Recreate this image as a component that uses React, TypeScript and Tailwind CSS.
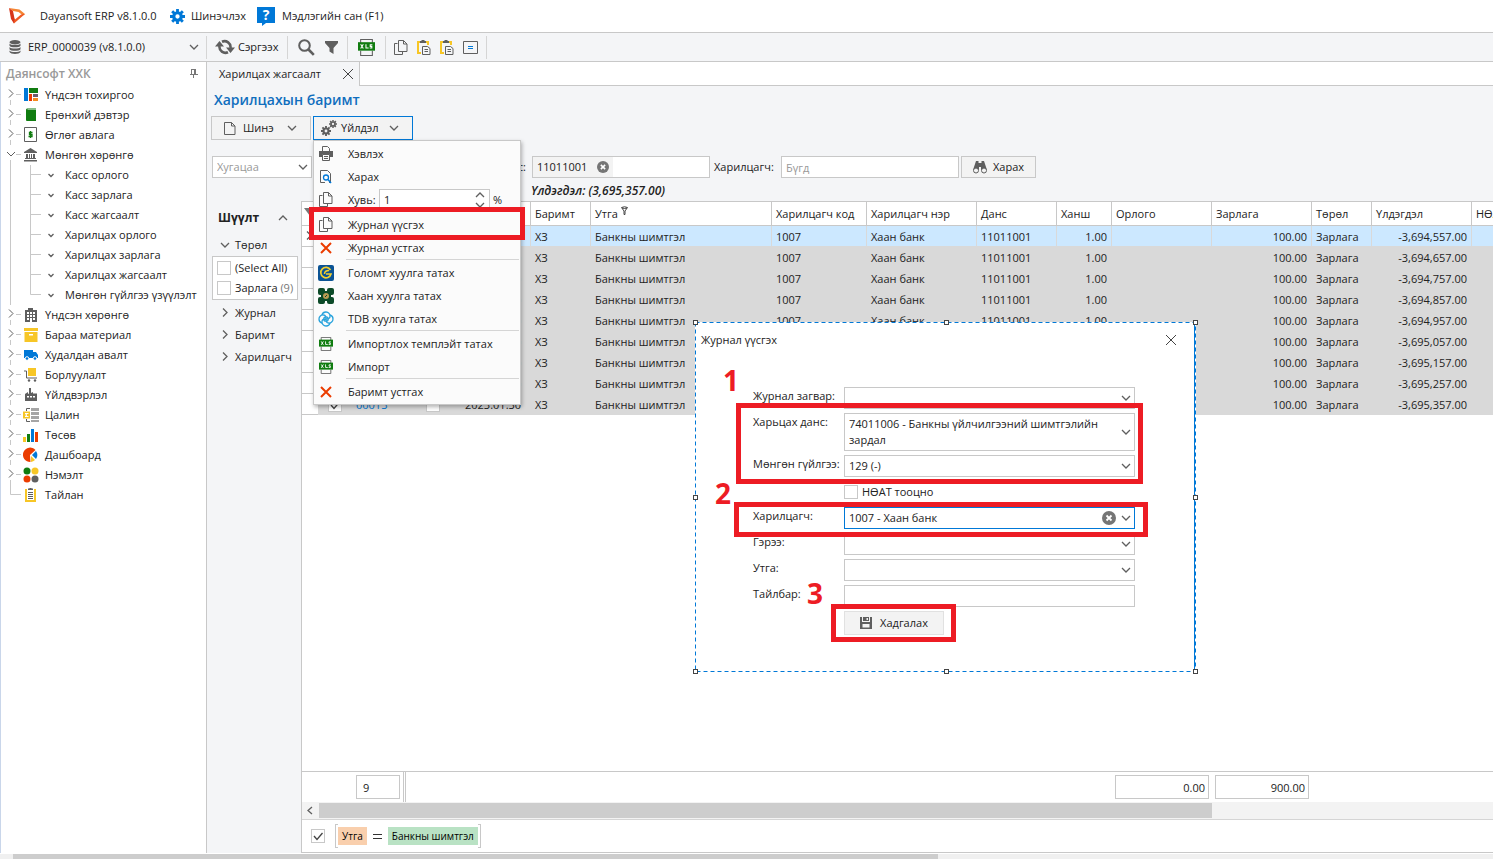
import type { ReactNode } from 'react'
import clsx from 'clsx'

const GRAY = '#5f5f5f'
const BLUE = '#0078d7'
const GREEN = '#107c10'
const RED = '#eb3c00'
const YELLOW = '#f7c626'

function Svg({ w, h, children, className }: { w: number; h: number; children: ReactNode; className?: string }) {
  return (
    <svg
      width={w}
      height={h}
      viewBox={`0 0 ${w} ${h}`}
      fill="none"
      aria-hidden="true"
      className={clsx('block shrink-0', className)}
    >
      {children}
    </svg>
  )
}

const ChevronDown = ({ className }: { className?: string }) => (
  <Svg w={10} h={10} className={className}>
    <path d="M1 3l4 4 4-4" stroke={GRAY} strokeWidth="1.300" />
  </Svg>
)

const ChevronRight = () => (
  <Svg w={10} h={10}>
    <path d="M3 .500l4 4-4 4" stroke={GRAY} strokeWidth="1.300" />
  </Svg>
)

const ChevronUp = () => (
  <Svg w={10} h={10}>
    <path d="M1 7l4-4 4 4" stroke={GRAY} strokeWidth="1.300" />
  </Svg>
)

const CloseIcon = () => (
  <Svg w={12} h={12}>
    <path d="M1 1l10 10M11 1L1 11" stroke="#444" />
  </Svg>
)

const ClearIcon = ({ size }: { size: number }) => (
  <svg width={size} height={size} viewBox="0 0 14 14" aria-hidden="true" className="block shrink-0">
    <circle cx="7" cy="7" r="7" fill="#757575" />
    <path d="M4.5 4.5l5 5M9.5 4.5l-5 5" stroke="#fff" strokeWidth="1.8" />
  </svg>
)

const Logo = () => (
  <Svg w={18} h={18}>
    <path d="M1 1l10.500 1.500L17 7l-2 1.500-4.500-3.500L5 4z" fill="#f58634" />
    <path d="M17 7L6 16.500 4 12.500l2.500-1 .500 1L13 7.500l2-.500z" fill="#ef5a24" />
    <path d="M1 1l4 3 1.500 7.500-.500 5L3 12z" fill="#d8351a" />
  </Svg>
)

function Gear({ size, color }: { size: number; color: string }) {
  return (
    <svg width={size} height={size} viewBox="0 0 16 16" fill="none" aria-hidden="true" className="block shrink-0">
      <circle cx="8" cy="8" r="4" stroke={color} strokeWidth="3.400" />
      <g stroke={color} strokeWidth="3">
        <path d="M8 0v3.500M8 12.500V16M0 8h3.500M12.500 8H16M2.300 2.300l2.500 2.500M11.200 11.200l2.500 2.500M13.700 2.300l-2.500 2.500M4.800 11.200l-2.500 2.500" />
      </g>
    </svg>
  )
}

const GearsIcon = () => (
  <span className="flex h-4 w-4 items-end">
    <Gear size={10} color={GRAY} />
    <span className="-ml-0.5 self-start">
      <Gear size={8} color={GRAY} />
    </span>
  </span>
)

const HelpIcon = () => (
  <span className="relative block h-[19px] w-[18px] text-center text-[14px] font-bold leading-[16px] text-white">
    <Svg w={18} h={19} className="absolute inset-0">
      <path d="M0 0h18v16H9l-4 3v-3H0z" fill={BLUE} />
    </Svg>
    <span className="relative">?</span>
  </span>
)

const DatabaseIcon = () => (
  <Svg w={12} h={14}>
    <g fill={GRAY}>
      <ellipse cx="6" cy="2.200" rx="5.500" ry="2.200" />
      <path d="M.5 3.500c1 2 10 2 11 0v2.300c-1 2-10 2-11 0z" />
      <path d="M.5 7c1 2 10 2 11 0v2.300c-1 2-10 2-11 0z" />
      <path d="M.5 10.500c1 2 10 2 11 0v1.500c-1 2.500-10 2.500-11 0z" />
    </g>
  </Svg>
)

const RefreshIcon = () => (
  <Svg w={20} h={16}>
    <path d="M4.500 7a6 6 0 0 0 8.500 6.200M15.500 9A6 6 0 0 0 7 2.800" stroke={GRAY} strokeWidth="2.600" />
    <path d="M0 7.500L4.500 2 9 7.500zM11 8.500h9L15.500 14z" fill={GRAY} />
  </Svg>
)

const SearchIcon = () => (
  <Svg w={17} h={17}>
    <circle cx="6.500" cy="6.500" r="5.300" stroke={GRAY} strokeWidth="2" />
    <path d="M10.500 10.500l5.300 5.300" stroke={GRAY} strokeWidth="2.600" />
  </Svg>
)

const FunnelIcon = () => (
  <Svg w={13} h={13}>
    <path d="M0 0h13v2L8.500 7v6l-4-2.500V7L0 2z" fill={GRAY} />
  </Svg>
)

function XlsIcon({ size }: { size: number }) {
  return (
    <svg width={size} height={size} viewBox="0 0 16 16" fill="none" aria-hidden="true" className="block shrink-0">
      <path d="M2.500 4V.500h11V4M2.500 11v4.500h11V11" stroke={GRAY} />
      <path d="M0 3h16v8H0z" fill={GREEN} />
      <path d="M2.500 5l2.500 4M5 5L2.500 9M7.500 5v3.500H10M13.500 5.500h-2v1.500h1.500v1.500h-2" stroke="#fff" strokeWidth="1" />
    </svg>
  )
}

const CopyIcon = () => (
  <Svg w={14} h={15}>
    <path d="M3.500 3.500h-3v11h8v-3" stroke={GRAY} />
    <path d="M4.500.500h5l3.500 3.500v7.500H4.500zM9.500.500V4H13" stroke={GRAY} />
  </Svg>
)

const PasteIcon = () => (
  <Svg w={14} h={15}>
    <path d="M3 2H1v11h3M9 2h2v3" stroke={YELLOW} strokeWidth="2" />
    <path d="M3 1h1.500V0h3v1H9v2H3z" fill={GRAY} />
    <path d="M5.500 6.500h5l2.500 2v6H5.500zM7.500 9.500h3.500M7.500 11.500h3.500" stroke={GRAY} />
  </Svg>
)

const EqualsBoxIcon = () => (
  <Svg w={15} h={13}>
    <path d="M.5.500h14v12H.5z" stroke={GRAY} />
    <path d="M5 5.500h5M5 7.500h5" stroke={BLUE} />
  </Svg>
)

const PinIcon = () => (
  <Svg w={8} h={9}>
    <path d="M1.500 0v5M1 .500h5M0 5.500h8M3.500 5v4" stroke="#777" />
    <path d="M4 0h2v5H4z" fill="#777" />
  </Svg>
)

const DocIcon = () => (
  <Svg w={12} h={13}>
    <path d="M.5.500h7l3.500 3.500v8.500H.5zM7.500.500V4H11" stroke={GRAY} />
  </Svg>
)

const BinocularsIcon = () => (
  <Svg w={14} h={13}>
    <path d="M3 0h2.500v2h3V0H11l3 9H8V6H6v3H0z" fill={GRAY} />
    <circle cx="3" cy="9.500" r="2.500" stroke={GRAY} fill="#f3f3f3" />
    <circle cx="11" cy="9.500" r="2.500" stroke={GRAY} fill="#f3f3f3" />
  </Svg>
)

const PrinterIcon = () => (
  <Svg w={14} h={15}>
    <path d="M3.500 5V.500h5L10.500 2.500V5" stroke={GRAY} />
    <path d="M0 5h14v6h-3V8.500H3V11H0z" fill={GRAY} />
    <path d="M3.500 8.500h7v6h-7zM5 10.500h4M5 12.500h4" stroke={GRAY} />
  </Svg>
)

const PreviewIcon = () => (
  <Svg w={12} h={14}>
    <path d="M5 12.500H.5V.500h7l3 3V12.500H9" stroke={GRAY} />
    <circle cx="6" cy="7.500" r="2.500" stroke={BLUE} strokeWidth="1.300" />
    <path d="M8 9.500l3 3.500" stroke={BLUE} strokeWidth="1.500" />
  </Svg>
)

const DeleteIcon = () => (
  <Svg w={12} h={12}>
    <path d="M1 1l10 10M11 1L1 11" stroke={RED} strokeWidth="2" />
  </Svg>
)

const GolomtIcon = () => (
  <Svg w={16} h={16}>
    <rect width="16" height="16" rx="2" fill="#0b5394" />
    <path d="M12.500 5A5.200 5.200 0 1 0 13 9H8" stroke="#f3d02f" strokeWidth="1.700" />
    <path d="M11 5.500c-3 0-4.500 1.500-4.500 3.500" stroke="#f3d02f" strokeWidth="1.500" />
  </Svg>
)

const KhanIcon = () => (
  <Svg w={16} h={16}>
    <g fill="#0c4a28">
      <rect width="7" height="7" rx="2" />
      <rect x="9" width="7" height="7" rx="2" />
      <rect y="9" width="7" height="7" rx="2" />
      <rect x="9" y="9" width="7" height="7" rx="2" />
      <path d="M3 3h10v10H3z" />
    </g>
    <circle cx="8" cy="8" r="3" fill="#b99b52" />
    <path d="M7 9l2-2" stroke="#0c4a28" />
  </Svg>
)

const TdbIcon = () => (
  <Svg w={16} h={16}>
    <g stroke="#2aa3dc" strokeWidth="1.300">
      <circle cx="8" cy="8" r="2.200" />
      <path d="M8 1a4 4 0 0 1 4 4.500c0 2-2 2.500-4 2.500M15 8a4 4 0 0 1-4.500 4c-2 0-2.500-2-2.500-4M8 15a4 4 0 0 1-4-4.500c0-2 2-2.500 4-2.500M1 8a4 4 0 0 1 4.500-4c2 0 2.500 2 2.500 4" />
      <path d="M12 4a4 4 0 0 1 3 4M12 12a4 4 0 0 1-4 3M4 12a4 4 0 0 1-3-4M4 4a4 4 0 0 1 4-3" />
    </g>
  </Svg>
)

const SaveIcon = () => (
  <Svg w={12} h={12}>
    <path d="M0 0h2v5h8V0h2v12H0z" fill={GRAY} />
    <path d="M3 0h6v4H3z" fill={GRAY} />
    <path d="M6.500 1h1.500v2H6.500zM2.500 7h7v3.500h-7z" fill="#f3f3f3" />
  </Svg>
)

const moduleIcons = {
  settings: (
    <>
      <path d="M1 1h4v13H1z" fill={BLUE} />
      <path d="M6 1h9v5H6z" fill={GREEN} />
      <path d="M6 7h3v7H6z" fill={RED} />
      <path d="M10 7h5v3h-5z" fill="#6b5b6b" />
      <path d="M10 11h5v3h-5z" fill="#f58b1f" />
    </>
  ),
  ledger: <path d="M3 3q0-1.500 1-1.500h9v1H4.500v.500H13v11H4q-1 0-1-1z" fill={GREEN} />,
  receivable: (
    <>
      <path d="M1.500.500h12v14h-12z" stroke={GRAY} />
      <path d="M9.500 5.500h-3v2h2.500v2H5.500M7.500 4v7" stroke={GREEN} strokeWidth="1.300" />
    </>
  ),
  bank: (
    <path
      d="M1 5l6.500-4L14 5v1H1zM3 7h2v4H3zM6 7h1v4H6zM8 7h1v4H8zM10 7h2v4h-2zM2 11h11v1H2zM1 13h13v1.500H1z"
      fill={GRAY}
    />
  ),
  building: (
    <>
      <path d="M5 1h5v2H5zM2 3h12v12H2z" fill={GRAY} />
      <path d="M4 5h2v2H4zM7 5h2v2H7zM10 5h2v2h-2zM4 8h2v2H4zM7 8h2v2H7zM10 8h2v2h-2zM4 11h2v2H4zM10 11h2v2h-2zM7 11h2v4H7z" fill="#fff" />
    </>
  ),
  box: (
    <>
      <path d="M1 1h14v3H1zM1.500 5h13v10h-13z" fill={YELLOW} />
      <path d="M6 7h4v1.500H6z" fill="#fff" />
    </>
  ),
  truck: (
    <>
      <path d="M1 3h9v8H1zM10 5h3l2 3v3h-5z" fill={BLUE} />
      <circle cx="4" cy="11.500" r="1.800" fill={BLUE} stroke="#fff" />
      <circle cx="12" cy="11.500" r="1.800" fill={BLUE} stroke="#fff" />
    </>
  ),
  cart: (
    <>
      <path d="M5 1h8v8H5z" fill={YELLOW} />
      <path d="M1 4h2.500v7H14" stroke={GRAY} />
      <circle cx="6" cy="13.500" r="1.200" fill={GRAY} />
      <circle cx="12" cy="13.500" r="1.200" fill={GRAY} />
    </>
  ),
  factory: (
    <>
      <path d="M2 7l3-2V7l1-.500V1h2v5l2-1v1.500h4V14H2z" fill={GRAY} />
      <path d="M4 9h2v1.500H4zM7 9h2v1.500H7zM10 9h2v1.500h-2z" fill="#fff" />
    </>
  ),
  salary: (
    <>
      <path d="M8 1h8v3H8zM8 5h8v3H8zM8 9h8v3H8zM8 13h8v2H8z" fill="#a5a5a5" />
      <path d="M7 1.500H3.500V4M7 14.500H3.500V12" stroke={GRAY} />
      <path d="M0 4.500h7v7H0z" fill={YELLOW} />
      <path d="M5.500 6.500H2l2 1.500-2 1.500h3.500" stroke="#fff" />
    </>
  ),
  bars: (
    <>
      <path d="M0 10h3v5H0z" fill={YELLOW} />
      <path d="M4 7h3v8H4z" fill={GREEN} />
      <path d="M8 2h3v13H8z" fill={BLUE} />
      <path d="M12 5h3v10h-3z" fill={RED} />
    </>
  ),
  pie: (
    <>
      <path d="M7 8l5.500-5A7.200 7.200 0 1 0 7.500 15z" fill={RED} />
      <path d="M9 8l4-4a7 7 0 0 1 0 8z" fill={BLUE} />
      <path d="M8 9l4 4a7 7 0 0 1-4 2z" fill={YELLOW} />
    </>
  ),
  dots: (
    <>
      <circle cx="4" cy="4" r="3.500" fill={GREEN} />
      <circle cx="12" cy="4" r="3.500" fill={YELLOW} />
      <circle cx="4" cy="12" r="3.500" fill={RED} />
      <circle cx="12" cy="12" r="3.500" fill={GRAY} />
    </>
  ),
  report: (
    <>
      <path d="M4 2H2v13h11V2h-2v11H4z" fill={YELLOW} />
      <path d="M5 1.500h1.500V1h2v.500H10V3H5z" fill={GRAY} />
      <path d="M5 5.500h5M5 7.500h5M5 9.500h5M5 11.500h5" stroke={GRAY} />
    </>
  ),
}

type ModuleIcon = keyof typeof moduleIcons

type TreeNode = { label: string; icon: ModuleIcon; children?: string[]; leaf?: boolean }

const tree: TreeNode[] = [
  { label: 'Үндсэн тохиргоо', icon: 'settings' },
  { label: 'Ерөнхий дэвтэр', icon: 'ledger' },
  { label: 'Өглөг авлага', icon: 'receivable' },
  {
    label: 'Мөнгөн хөрөнгө',
    icon: 'bank',
    children: [
      'Касс орлого',
      'Касс зарлага',
      'Касс жагсаалт',
      'Харилцах орлого',
      'Харилцах зарлага',
      'Харилцах жагсаалт',
      'Мөнгөн гүйлгээ үзүүлэлт',
    ],
  },
  { label: 'Үндсэн хөрөнгө', icon: 'building' },
  { label: 'Бараа материал', icon: 'box' },
  { label: 'Худалдан авалт', icon: 'truck' },
  { label: 'Борлуулалт', icon: 'cart' },
  { label: 'Үйлдвэрлэл', icon: 'factory' },
  { label: 'Цалин', icon: 'salary' },
  { label: 'Төсөв', icon: 'bars' },
  { label: 'Дашбоард', icon: 'pie' },
  { label: 'Нэмэлт', icon: 'dots' },
  { label: 'Тайлан', icon: 'report', leaf: true },
]

function TreeItem({ node }: { node: TreeNode }) {
  return (
    <li>
      <div className="flex h-5 items-center">
        <Svg w={20} h={20}>
          {node.leaf ? (
            <path d="M9.500 0v9.500H20" stroke="#c8c8c8" />
          ) : (
            <>
              <path d="M9.500 15v5M15 9.500h5" stroke="#c8c8c8" />
              <path d={node.children ? 'M6 7l4 4 4-4' : 'M8 4.500l4 4-4 4'} stroke={GRAY} />
            </>
          )}
        </Svg>
        <Svg w={16} h={16} className="ml-0.5 mr-1.5">
          {moduleIcons[node.icon]}
        </Svg>
        <a href="#" className="whitespace-nowrap">{node.label}</a>
      </div>
      {node.children && (
        <ul>
          {node.children.map((label, i) => (
            <li key={label} className="flex h-5 items-center">
              <Svg w={40} h={20}>
                <path d="M9.500 0v20" stroke="#c8c8c8" />
                <path d={i === node.children!.length - 1 ? 'M29.500 0v9.500H40' : 'M29.500 0v20M30 9.500h10'} stroke="#c8c8c8" />
              </Svg>
              <Svg w={6} h={5} className="ml-[7px] mr-[11px]">
                <path d="M.5 1L3 3.500 5.500 1" stroke={GRAY} strokeWidth="1.300" />
              </Svg>
              <a href="#" className="whitespace-nowrap">{label}</a>
            </li>
          ))}
        </ul>
      )}
    </li>
  )
}

function Check({ id, checked, label }: { id?: string; checked?: boolean; label?: string }) {
  return (
    <span className="relative block h-3.5 w-3.5 shrink-0">
      <input
        id={id}
        type="checkbox"
        aria-label={label}
        defaultChecked={checked}
        className="peer block h-3.5 w-3.5 appearance-none border border-[#c8c8c8] bg-white"
      />
      <Svg w={14} h={14} className="pointer-events-none invisible absolute inset-0 peer-checked:visible">
        <path d="M3 7l3 3.500L11.500 4" stroke="#444" strokeWidth="1.300" />
      </Svg>
    </span>
  )
}

const menuItemClass = 'flex h-[23px] w-full items-center whitespace-nowrap text-left hover:bg-[#e5f1fb]'

function MenuItem({ icon, children }: { icon: ReactNode; children: ReactNode }) {
  return (
    <button type="button" role="menuitem" className={menuItemClass}>
      <span className="mr-2.5 flex w-6 shrink-0 items-center justify-center">{icon}</span>
      {children}
    </button>
  )
}

const MenuDivider = () => <div className="ml-8 mr-px h-0.5 border-t border-[#d5d5d5]" />

function ActionMenu() {
  return (
    <div
      role="menu"
      className="absolute left-0 top-full z-10 w-[208px] border border-[#c8c8c8] bg-[#fbfbfb] py-px shadow-[1px_2px_4px_rgba(0,0,0,0.3)]"
    >
      <MenuItem icon={<PrinterIcon />}>Хэвлэх</MenuItem>
      <MenuItem icon={<PreviewIcon />}>Харах</MenuItem>
      <div className="flex h-[25px] items-center pb-0.5">
        <span className="mr-2.5 flex w-6 shrink-0 items-center justify-center">
          <CopyIcon />
        </span>
        <label htmlFor="percent" className="w-[31px] whitespace-nowrap">Хувь:</label>
        <div className="flex h-[22px] w-[111px] items-center border border-[#c8c8c8] bg-white pl-1">
          <input id="percent" defaultValue="1" className="min-w-0 flex-1 outline-none" />
          <span className="mr-1 flex flex-col">
            <ChevronUp />
            <ChevronDown />
          </span>
        </div>
        <span className="pl-[3px]">%</span>
      </div>
      <MenuItem icon={<CopyIcon />}>Журнал үүсгэх</MenuItem>
      <MenuItem icon={<DeleteIcon />}>Журнал устгах</MenuItem>
      <MenuDivider />
      <MenuItem icon={<GolomtIcon />}>Голомт хуулга татах</MenuItem>
      <MenuItem icon={<KhanIcon />}>Хаан хуулга татах</MenuItem>
      <MenuItem icon={<TdbIcon />}>TDB хуулга татах</MenuItem>
      <MenuDivider />
      <MenuItem icon={<XlsIcon size={14} />}>Импортлох темплэйт татах</MenuItem>
      <MenuItem icon={<XlsIcon size={14} />}>Импорт</MenuItem>
      <MenuDivider />
      <MenuItem icon={<DeleteIcon />}>Баримт устгах</MenuItem>
      <div className="pointer-events-none absolute -left-[5px] top-[66px] h-[33px] w-[216px] border-5 border-[#ed1c24]" />
    </div>
  )
}

const columns = [
  { title: '', width: 16 },
  { title: '', width: 34 },
  { title: 'Дугаар', width: 53 },
  { title: '', width: 56 },
  { title: 'Огноо', width: 70 },
  { title: 'Баримт', width: 60 },
  { title: 'Утга', width: 181, filtered: true },
  { title: 'Харилцагч код', width: 95 },
  { title: 'Харилцагч нэр', width: 110 },
  { title: 'Данс', width: 80 },
  { title: 'Ханш', width: 55 },
  { title: 'Орлого', width: 100 },
  { title: 'Зарлага', width: 100 },
  { title: 'Төрөл', width: 60 },
  { title: 'Үлдэгдэл', width: 100 },
  { title: 'НӨАТ', width: 120 },
]

const rows = [
  { no: '00005', balance: '-3,694,557.00' },
  { no: '00006', balance: '-3,694,657.00' },
  { no: '00007', balance: '-3,694,757.00' },
  { no: '00008', balance: '-3,694,857.00' },
  { no: '00009', balance: '-3,694,957.00' },
  { no: '00010', balance: '-3,695,057.00' },
  { no: '00011', balance: '-3,695,157.00' },
  { no: '00012', balance: '-3,695,257.00' },
  { no: '00013', balance: '-3,695,357.00' },
]

const cell = 'border-b border-r border-[#d9d9d9] px-1 pb-0 pt-px whitespace-nowrap overflow-hidden'

function DocumentTable() {
  return (
    <table className="w-[1290px] table-fixed border-separate border-spacing-0 text-left">
      <colgroup>
        {columns.map((c, i) => (
          <col key={i} style={{ width: c.width }} />
        ))}
      </colgroup>
      <thead>
        <tr className="h-6">
          {columns.map((c, i) => (
            <th key={i} className="overflow-hidden whitespace-nowrap border-b border-r border-[#c8c8c8] px-1 pb-0 pt-px font-normal leading-[22px]">
              {i === 0 ? (
                <Svg w={12} h={12} className="-ml-0.5">
                  <path d="M0 0h12L6 8z" fill="#777" />
                </Svg>
              ) : (
                <span className="flex">
                  {c.title}
                  {c.filtered && (
                    <Svg w={7} h={9} className="ml-[3px] mt-[3px]">
                      <path d="M.5 1.500q3-1.500 6 0L4 5v3.500H3V5zM1 2q2.500 1 5 0" stroke="#444" fill="#fff" />
                    </Svg>
                  )}
                </span>
              )}
            </th>
          ))}
        </tr>
      </thead>
      <tbody>
        {rows.map((r, i) => (
          <tr key={r.no} className={clsx('h-[21px] leading-[19px]', i === 0 ? 'bg-[#cce8ff]' : 'bg-[#d9d9d9]')}>
            <td className="border-b border-[#c8c8c8] bg-white p-0 pl-0.5">{i === 0 && <ChevronRight />}</td>
            <td className={cell}>
              <span className="flex justify-center"><Check checked label={`Сонгох ${r.no}`} /></span>
            </td>
            <td className={cell}><a href="#" className="text-[#0078d7]">{r.no}</a></td>
            <td className={cell}>
              <span className="flex justify-center"><Check label={`Журнал ${r.no}`} /></span>
            </td>
            <td className={cell}>2023.01.30</td>
            <td className={cell}>ХЗ</td>
            <td className={cell}>Банкны шимтгэл</td>
            <td className={cell}>1007</td>
            <td className={cell}>Хаан банк</td>
            <td className={cell}>11011001</td>
            <td className={clsx(cell, 'text-right')}>1.00</td>
            <td className={cell} />
            <td className={clsx(cell, 'text-right')}>100.00</td>
            <td className={cell}>Зарлага</td>
            <td className={clsx(cell, 'text-right')}>{r.balance}</td>
            <td className={cell} />
          </tr>
        ))}
      </tbody>
    </table>
  )
}

function Combo({
  id,
  value,
  clearable,
  focused,
  tall,
}: {
  id: string
  value?: string
  clearable?: boolean
  focused?: boolean
  tall?: boolean
}) {
  return (
    <div className="relative w-[291px]">
      <select
        id={id}
        className={clsx(
          'block w-full appearance-none border bg-white pl-1 pr-6 outline-none',
          focused ? 'border-[#0078d7]' : 'border-[#c8c8c8]',
          tall ? 'h-[38px] whitespace-normal leading-4' : 'h-[22px]',
        )}
      >
        <option>{value}</option>
      </select>
      <span className="pointer-events-none absolute inset-y-0 right-1 flex items-center gap-[5px]">
        {clearable && <ClearIcon size={14} />}
        <ChevronDown />
      </span>
    </div>
  )
}

function FormRow({ id, label, children }: { id: string; label: string; children: ReactNode }) {
  return (
    <div className="flex items-start">
      <label htmlFor={id} className="w-[91px] shrink-0 whitespace-nowrap leading-[18px]">{label}</label>
      {children}
    </div>
  )
}

// centres of the drag handles on the selection frame
const handles = [
  [3, 3], [254, 3], [503, 3],
  [3, 178], [503, 178],
  [3, 352], [254, 352], [503, 352],
]

function JournalDialog() {
  return (
    <section role="dialog" aria-label="Журнал үүсгэх" className="absolute left-[695px] top-[322px] z-20 h-[350px] w-[501px] bg-white">
      <header className="flex items-center justify-between pl-1.5 pr-[19px] pt-2">
        <h2 className="leading-5">Журнал үүсгэх</h2>
        <button type="button" aria-label="Хаах"><CloseIcon /></button>
      </header>
      <form className="mt-[37px] flex flex-col gap-1 pl-[58px]">
        <FormRow id="template" label="Журнал загвар:"><Combo id="template" /></FormRow>
        <FormRow id="account" label="Харьцах данс:">
          <Combo id="account" tall value="74011006 - Банкны үйлчилгээний шимтгэлийн зардал" />
        </FormRow>
        <FormRow id="cashflow" label="Мөнгөн гүйлгээ:"><Combo id="cashflow" value="129 (-)" /></FormRow>
        <div className="flex h-[22px] items-center gap-1 pl-[91px]">
          <Check id="vat" />
          <label htmlFor="vat">НӨАТ тооцно</label>
        </div>
        <FormRow id="partner" label="Харилцагч:">
          <Combo id="partner" value="1007 - Хаан банк" clearable focused />
        </FormRow>
        <FormRow id="contract" label="Гэрээ:"><Combo id="contract" /></FormRow>
        <FormRow id="meaning" label="Утга:"><Combo id="meaning" /></FormRow>
        <FormRow id="note" label="Тайлбар:">
          <input id="note" className="h-[22px] w-[291px] border border-[#c8c8c8] bg-white px-1 outline-none" />
        </FormRow>
        <button
          type="button"
          className="ml-[91px] flex h-6 w-[100px] items-center justify-center gap-2 border border-[#e1e1e1] bg-[#f3f3f3]"
        >
          <SaveIcon />
          Хадгалах
        </button>
      </form>

      <Svg w={507} h={356} className="pointer-events-none absolute -left-[3px] -top-[3px]">
        <path d="M502.500 3v350" stroke={BLUE} />
        <rect x="3.500" y="3.500" width="500" height="349" stroke={BLUE} strokeDasharray="4 3" />
        {handles.map(([x, y]) => (
          <rect key={`${x}-${y}`} x={x - 1.5} y={y - 1.5} width="4" height="4" fill="#fff" stroke="#444" />
        ))}
      </Svg>
      <div className="pointer-events-none absolute left-[41px] top-[81px] h-[81px] w-[407px] border-5 border-[#ed1c24]" />
      <div className="pointer-events-none absolute left-[39px] top-[180px] h-[35px] w-[414px] border-5 border-[#ed1c24]" />
      <div className="pointer-events-none absolute left-[136px] top-[282px] h-[38px] w-[125px] border-5 border-[#ed1c24]" />
      <b className="absolute left-7 top-11 text-[28px] leading-7 text-[#ed1c24]">1</b>
      <b className="absolute left-5 top-[157px] text-[28px] leading-7 text-[#ed1c24]">2</b>
      <b className="absolute left-28 top-[257px] text-[28px] leading-7 text-[#ed1c24]">3</b>
    </section>
  )
}

const ToolSeparator = () => <span className="h-[23px] w-px bg-[#d5d5d5]" />

export default function App() {
  return (
    <div className="relative flex h-screen flex-col overflow-hidden bg-white font-['Open_Sans','Noto_Sans',sans-serif] text-[11px] leading-4 text-[#222]">
      <header className="flex h-[33px] shrink-0 items-center whitespace-nowrap border-b border-[#c8c8c8] pl-2">
        <Logo />
        <span className="ml-3.5 w-[130px]">Dayansoft ERP v8.1.0.0</span>
        <button type="button" className="flex w-[87px] items-center gap-1.5"><Gear size={15} color={BLUE} />Шинэчлэх</button>
        <button type="button" className="flex items-center gap-[7px]"><HelpIcon />Мэдлэгийн сан (F1)</button>
      </header>

      <div className="flex h-[29px] shrink-0 items-center border-b border-[#c8c8c8] bg-[#f4f5f7]">
        <button type="button" className="flex w-[206px] items-center whitespace-nowrap pl-[9px] pr-[7px]">
          <DatabaseIcon />
          <span className="ml-[7px] flex-1 text-left">ERP_0000039 (v8.1.0.0)</span>
          <ChevronDown />
        </button>
        <ToolSeparator />
        <button type="button" className="flex w-20 items-center gap-[3px] whitespace-nowrap pl-2"><RefreshIcon />Сэргээх</button>
        <ToolSeparator />
        <button type="button" aria-label="Хайх" className="ml-2.5"><SearchIcon /></button>
        <button type="button" aria-label="Шүүх" className="ml-2.5 mr-[9px]"><FunnelIcon /></button>
        <ToolSeparator />
        <button type="button" aria-label="Excel" className="mx-[10px]"><XlsIcon size={17} /></button>
        <ToolSeparator />
        <div className="mx-2 flex items-center gap-[9px]">
          <button type="button" aria-label="Хуулах"><CopyIcon /></button>
          <button type="button" aria-label="Буулгах"><PasteIcon /></button>
          <button type="button" aria-label="Мөр буулгах"><PasteIcon /></button>
          <button type="button" aria-label="Тооцох"><EqualsBoxIcon /></button>
        </div>
        <ToolSeparator />
      </div>

      <div className="flex min-h-0 flex-1 border-l border-[#c9d6ea]">
        <nav className="w-[206px] shrink-0 overflow-hidden border-r border-[#c8c8c8]">
          <div className="flex h-[23px] items-center justify-between pl-[5px] pr-2">
            <h2 className="text-[12px] font-semibold text-[#999]">Даянсофт ХХК</h2>
            <button type="button" aria-label="Бэхлэх"><PinIcon /></button>
          </div>
          <ul>
            {tree.map((node) => (
              <TreeItem key={node.label} node={node} />
            ))}
          </ul>
        </nav>

        <main className="flex min-w-0 flex-1 flex-col bg-[#f4f5f7]">
          <div className="flex h-6 shrink-0">
            <div className="flex w-[153px] items-center justify-between whitespace-nowrap border-r border-[#c8c8c8] pl-3 pr-[5px]">
              Харилцах жагсаалт
              <button type="button" aria-label="Хаах"><CloseIcon /></button>
            </div>
            <div className="flex-1 border-b border-[#c8c8c8] bg-white" />
          </div>

          <h1 className="h-7 shrink-0 pl-[7px] text-[14px] font-semibold leading-7 text-[#106ebe]">Харилцахын баримт</h1>

          <div className="mt-0.5 flex shrink-0 gap-0.5 pl-1">
            <button type="button" className="flex h-6 w-[100px] items-center border border-[#c8c8c8] bg-[#f3f3f3] pl-3">
              <DocIcon />
              <span className="ml-[7px] flex-1 text-left">Шинэ</span>
              <ChevronDown className="mr-[13px]" />
            </button>
            <div className="relative">
              <button type="button" aria-haspopup="menu" className="flex h-6 w-[100px] items-center border border-[#0078d7] bg-[#f3f3f3] pl-[7px]">
                <GearsIcon />
                <span className="ml-1 flex-1 text-left">Үйлдэл</span>
                <ChevronDown className="mr-[13px]" />
              </button>
              <ActionMenu />
            </div>
          </div>

          <div className="mt-4 flex shrink-0 items-center whitespace-nowrap pl-[5px]">
            <div className="relative w-[100px]">
              <select aria-label="Хугацаа" className="block h-[22px] w-full appearance-none border border-[#c8c8c8] bg-white pl-1 text-[#999] outline-none">
                <option>Хугацаа</option>
              </select>
              <ChevronDown className="pointer-events-none absolute right-1 top-1.5" />
            </div>
            <label htmlFor="acc" className="mr-1.5 w-[214px] text-right">Данс:</label>
            <div className="flex h-[22px] w-[178px] items-center border border-[#c8c8c8] bg-white">
              <span className="flex h-full items-center gap-2.5 bg-[#f3f3f3] px-1">
                11011001
                <button type="button" aria-label="Арилгах"><ClearIcon size={12} /></button>
              </span>
              <input id="acc" className="min-w-0 flex-1 outline-none" />
            </div>
            <label htmlFor="customer" className="ml-1 w-[67px]">Харилцагч:</label>
            <input
              id="customer"
              placeholder="Бүгд"
              className="h-[22px] w-[178px] border border-[#c8c8c8] bg-white px-1 outline-none placeholder:text-[#999]"
            />
            <button type="button" className="ml-0.5 flex h-[22px] w-[75px] items-center justify-center gap-1.5 border border-[#c8c8c8] bg-[#f3f3f3]">
              <BinocularsIcon />
              Харах
            </button>
          </div>

          <p className="h-[23px] shrink-0 pl-[324px] text-[12px] font-semibold italic leading-[25px]">Үлдэгдэл: (3,695,357.00)</p>

          <div className="flex min-h-0 flex-1">
            <aside className="w-[94px] shrink-0">
              <div className="flex h-[34px] items-center justify-between pl-[11px] pr-[13px]">
                <h3 className="text-[12px] font-bold">Шүүлт</h3>
                <ChevronUp />
              </div>
              <div className="flex h-5 items-center gap-[5px] pl-[13px]"><ChevronDown />Төрөл</div>
              <div className="ml-[5px] mt-px w-[86px] whitespace-nowrap border border-[#c8c8c8] bg-white py-px pl-1">
                <div className="flex h-5 items-center gap-1">
                  <Check id="all" />
                  <label htmlFor="all">(Select All)</label>
                </div>
                <div className="flex h-5 items-center gap-1">
                  <Check id="expense" />
                  <label htmlFor="expense">Зарлага <span className="text-[#777]">(9)</span></label>
                </div>
              </div>
              <ul className="mt-0.5">
                {['Журнал', 'Баримт', 'Харилцагч'].map((label) => (
                  <li key={label} className="flex h-[22px] items-center gap-[5px] whitespace-nowrap pl-[13px]">
                    <ChevronRight />
                    {label}
                  </li>
                ))}
              </ul>
            </aside>

            <div className="flex min-w-0 flex-1 flex-col border-y border-l border-[#c8c8c8] bg-white">
              <div className="min-h-0 flex-1 overflow-hidden">
                <DocumentTable />
              </div>
              <div className="flex h-[31px] shrink-0 items-center overflow-hidden border-t border-[#c8c8c8]">
                <output className="ml-[54px] h-6 w-11 shrink-0 border border-[#c8c8c8] pl-1.5 leading-[23px]">9</output>
                <span className="ml-[3px] mr-[709px] h-full w-[3px] shrink-0 border-x border-[#c8c8c8]" />
                <output className="h-6 w-[94px] shrink-0 border border-[#c8c8c8] pr-[3px] text-right leading-[23px]">0.00</output>
                <output className="ml-1.5 h-6 w-[94px] shrink-0 border border-[#c8c8c8] pr-[3px] text-right leading-[23px]">900.00</output>
              </div>
              <div className="flex h-[17px] shrink-0 items-center bg-[#f3f3f3]">
                <Svg w={17} h={17}>
                  <path d="M10 5L6 8.500l4 3.500" stroke={GRAY} strokeWidth="1.300" />
                </Svg>
                <div className="h-[15px] w-[75%] bg-[#cdcdcd]" />
              </div>
              <div className="flex h-[33px] shrink-0 items-center border-t border-[#d5d5d5] pl-[9px]">
                <Check checked label="Шүүлтүүр идэвхтэй" />
                <div className="ml-2.5 flex h-6 items-center text-[10px] leading-[18px] text-black">
                  <span className="h-6 w-[3px] border-y border-l border-[#c8c8c8]" />
                  <span className="bg-[#f9cfad] px-1">Утга</span>
                  <Svg w={9} h={5} className="mx-1.5">
                    <path d="M0 .500h9M0 4.500h9" stroke="#333" />
                  </Svg>
                  <span className="bg-[#b9e2c4] px-1">Банкны шимтгэл</span>
                  <span className="h-6 w-[3px] border-y border-r border-[#c8c8c8]" />
                </div>
              </div>
            </div>
          </div>
        </main>
      </div>

      <div className="flex h-1.5 shrink-0 border-t border-white bg-[#f0f0f0] pl-[13px]">
        <div className="w-[62.5%] bg-[#cdcdcd]" />
      </div>

      <JournalDialog />
    </div>
  )
}
